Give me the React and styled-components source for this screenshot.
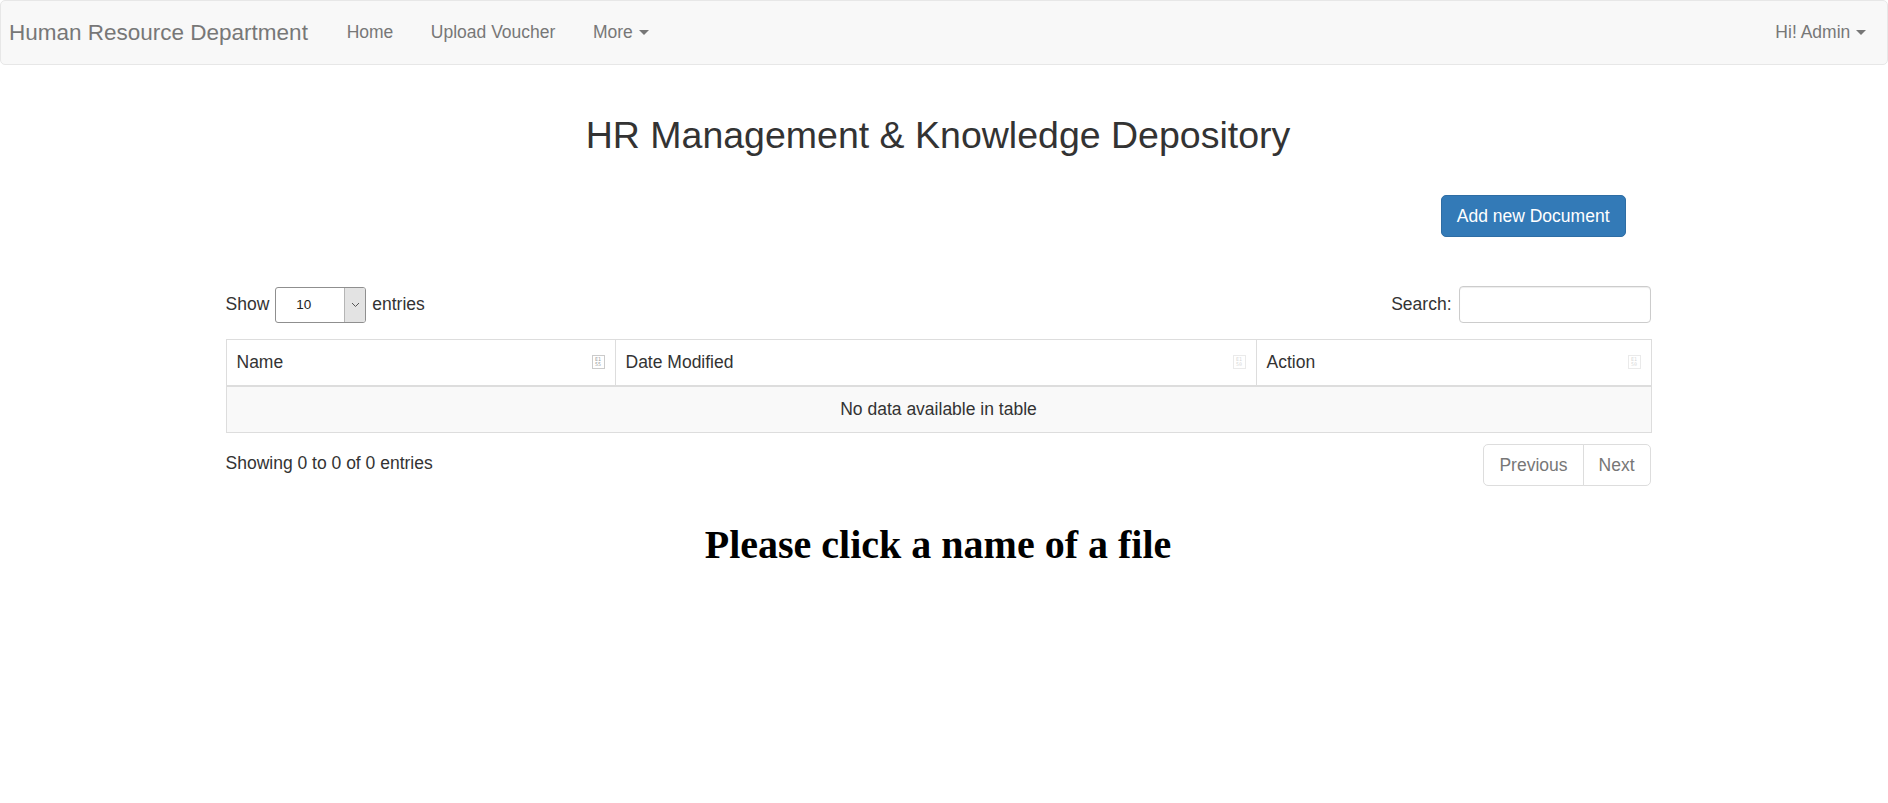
import React from 'react'
import styled, { createGlobalStyle } from 'styled-components'

const GlobalStyle = createGlobalStyle`
  * { box-sizing: border-box; }
  body {
    margin: 0;
    background: #fff;
    font-family: "Liberation Sans", Arial, sans-serif;
    font-size: 17.5px;
    line-height: 25px;
    color: #333;
  }
`

const Navbar = styled.nav`
  display: flex;
  align-items: center;
  height: 65px;
  background: #f8f8f8;
  border: 1px solid #e7e7e7;
  border-radius: 5px;
  margin-bottom: 25px;
`

const Brand = styled.a`
  font-size: 22.5px;
  line-height: 25px;
  color: #777;
  padding: 0 20px 0 8px;
`

const NavLink = styled.a`
  display: flex;
  align-items: center;
  padding: 0 18.75px;
  color: #777;
  font-size: 17.5px;
`

const RightNav = styled.div`
  display: flex;
  margin-left: auto;
  padding-right: 2px;
`

const Caret = styled.span`
  display: inline-block;
  width: 0;
  height: 0;
  margin-left: 6px;
  border-top: 5px solid #777;
  border-left: 5px solid transparent;
  border-right: 5px solid transparent;
`

const Page = styled.div`
  display: flow-root;
  padding-right: 12px;
`

const Container = styled.div`
  width: 1425px;
  margin: 0 auto;
`

const Title = styled.h2`
  margin: 25px 0 0;
  font-size: 37.5px;
  font-weight: 500;
  line-height: 41.25px;
  text-align: center;
  color: #333;
`

const ButtonRow = styled.div`
  display: flex;
  justify-content: flex-end;
  margin-top: 39px;
  padding-right: 25px;
`

const PrimaryButton = styled.button`
  height: 42px;
  padding: 0 15px;
  font-family: inherit;
  font-size: 17.5px;
  color: #fff;
  background: #337ab7;
  border: 1px solid #2e6da4;
  border-radius: 5px;
`

const Controls = styled.div`
  display: flex;
  justify-content: space-between;
  align-items: center;
  margin-top: 49px;
  height: 37px;
`

const Label = styled.label`
  display: flex;
  align-items: center;
  gap: ${p => p.$gap || 6}px;
`

const SelectBox = styled.div`
  display: flex;
  width: 91px;
  height: 36px;
  border: 1px solid #8f8f8f;
  border-radius: 3px;
  overflow: hidden;
  background: #fff;
`

const SelectValue = styled.span`
  flex: 1;
  padding-left: 20px;
  display: flex;
  align-items: center;
  font-size: 13.5px;
  color: #222;
`

const SelectArrow = styled.span`
  width: 21px;
  display: flex;
  align-items: center;
  justify-content: center;
  background: #e3e3e3;
  border-left: 1px solid #b5b5b5;
`

const SearchInput = styled.input`
  width: 192px;
  height: 37px;
  border: 1px solid #ccc;
  border-radius: 4px;
  box-shadow: inset 0 1px 1px rgba(0, 0, 0, 0.075);
  outline: none;
`

const Table = styled.table`
  width: 100%;
  margin-top: 16px;
  border-collapse: collapse;
  table-layout: fixed;
  border: 1px solid #ddd;
`

const Th = styled.th`
  width: ${p => p.$w}px;
  padding: 10px;
  font-weight: 400;
  text-align: left;
  border: 1px solid #ddd;
  border-bottom: 2px solid #ddd;
`

const HeadCell = styled.div`
  display: flex;
  justify-content: space-between;
  align-items: center;
`

const SortGlyph = styled.span`
  display: inline-flex;
  flex-direction: column;
  align-items: center;
  justify-content: center;
  width: 13px;
  height: 14px;
  border: 1px solid #999;
  font-family: "DejaVu Sans Mono", monospace;
  font-size: 5px;
  line-height: 5px;
  color: #333;
  opacity: ${p => (p.$active ? 0.5 : 0.2)};
  margin-top: -2px;
`

const EmptyCell = styled.td`
  padding: 10px;
  text-align: center;
  background: #f9f9f9;
  border-bottom: 1px solid #ddd;
`

const Footer = styled.div`
  display: flex;
  justify-content: space-between;
  align-items: center;
  margin-top: 11px;
`

const Info = styled.span`
  padding-bottom: 4px;
`

const Pager = styled.div`
  display: flex;
`

const PageButton = styled.span`
  height: 42px;
  display: flex;
  align-items: center;
  padding: 0 15px;
  color: #777;
  background: #fff;
  border: 1px solid #ddd;
  margin-left: -1px;
  &:first-child { border-radius: 5px 0 0 5px; }
  &:last-child { border-radius: 0 5px 5px 0; }
`

const Prompt = styled.h1`
  margin: 36px 0 0;
  font-family: "Liberation Serif", "Times New Roman", serif;
  font-size: 40px;
  line-height: 46px;
  font-weight: 700;
  text-align: center;
  color: #000;
`

const Chevron = () => (
  <svg width="9" height="6" viewBox="0 0 9 6">
    <path d="M1 1l3.5 3.5L8 1" fill="none" stroke="#555" strokeWidth="1" />
  </svg>
)

const Glyph = ({ code, active }) => (
  <SortGlyph $active={active}>
    <span>E1</span>
    <span>{code}</span>
  </SortGlyph>
)

const columns = [
  { name: 'Name', w: 389, code: '55', active: true },
  { name: 'Date Modified', w: 641, code: '50' },
  { name: 'Action', w: 395, code: '50' },
]

export default function App() {
  return (
    <>
      <GlobalStyle />
      <Navbar>
        <Brand>Human Resource Department</Brand>
        <NavLink>Home</NavLink>
        <NavLink>Upload Voucher</NavLink>
        <NavLink>More<Caret /></NavLink>
        <RightNav>
          <NavLink>Hi! Admin<Caret /></NavLink>
        </RightNav>
      </Navbar>
      <Page>
        <Container>
          <Title>HR Management &amp; Knowledge Depository</Title>
          <ButtonRow>
            <PrimaryButton>Add new Document</PrimaryButton>
          </ButtonRow>
          <Controls>
            <Label>
              Show
              <SelectBox>
                <SelectValue>10</SelectValue>
                <SelectArrow><Chevron /></SelectArrow>
              </SelectBox>
              entries
            </Label>
            <Label $gap={7}>
              Search:
              <SearchInput />
            </Label>
          </Controls>
          <Table>
            <thead>
              <tr>
                {columns.map(c => (
                  <Th key={c.name} $w={c.w}>
                    <HeadCell>
                      {c.name}
                      <Glyph code={c.code} active={c.active} />
                    </HeadCell>
                  </Th>
                ))}
              </tr>
            </thead>
            <tbody>
              <tr>
                <EmptyCell colSpan={3}>No data available in table</EmptyCell>
              </tr>
            </tbody>
          </Table>
          <Footer>
            <Info>Showing 0 to 0 of 0 entries</Info>
            <Pager>
              <PageButton>Previous</PageButton>
              <PageButton>Next</PageButton>
            </Pager>
          </Footer>
          <Prompt>Please click a name of a file</Prompt>
        </Container>
      </Page>
    </>
  )
}
